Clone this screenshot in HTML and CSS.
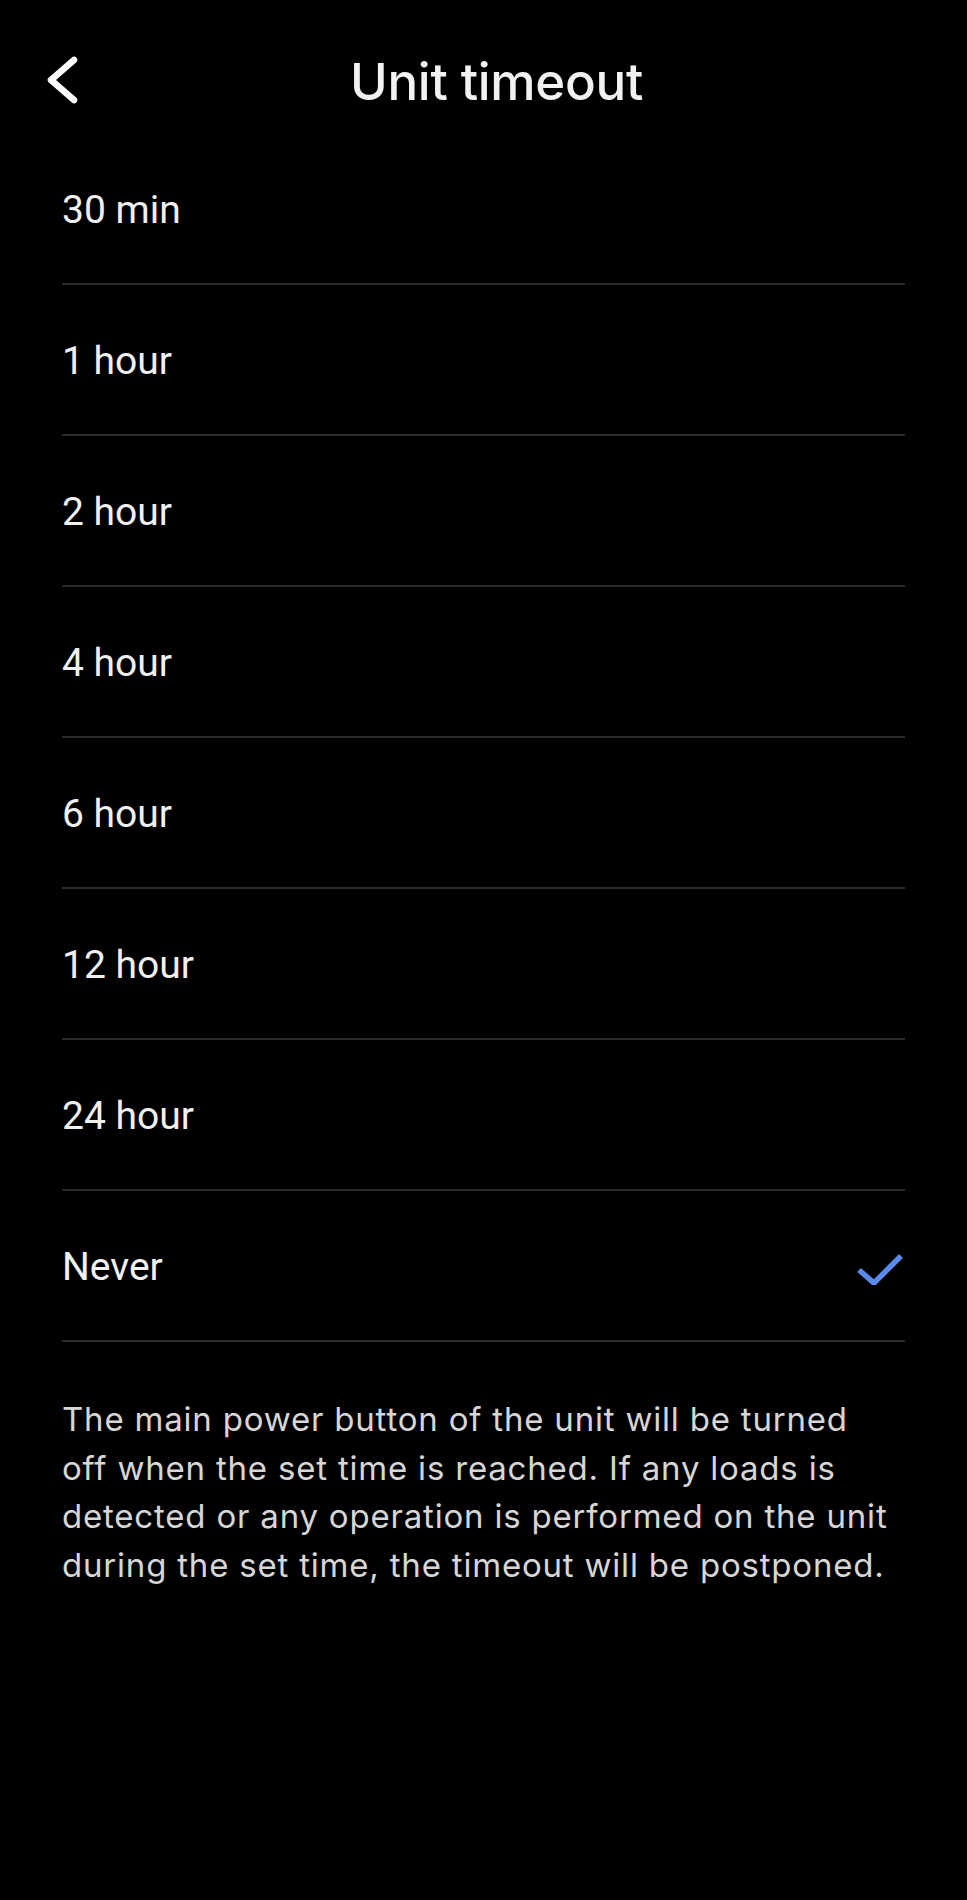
FILE: index.html
```html
<!DOCTYPE html>
<html lang="en">
<head>
    <meta charset="UTF-8">
    <meta name="viewport" content="width=device-width, initial-scale=1.0">
    <title>Unit timeout</title>
    <link rel="stylesheet" href="styles.css">
</head>
<body>
    <div class="header">
        <button class="back" aria-label="Back">
            <svg width="36" height="52" viewBox="0 0 36 52">
                <path d="M30 6 L7 26 L30 46" fill="none" stroke="#fff" stroke-width="6.5" stroke-linecap="round" stroke-linejoin="round"/>
            </svg>
        </button>
        <h1 class="title">Unit timeout</h1>
        <div class="spacer"></div>
    </div>

    <div class="content">
        <ul class="options">
            <li class="option">30 min</li>
            <li class="option">1 hour</li>
            <li class="option">2 hour</li>
            <li class="option">4 hour</li>
            <li class="option">6 hour</li>
            <li class="option">12 hour</li>
            <li class="option">24 hour</li>
            <li class="option selected">Never
                <svg class="check" width="50" height="36" viewBox="0 0 50 36">
                    <path d="M4 21 L19 34 L46 7" fill="none" stroke="#5a8bea" stroke-width="5.5"/>
                </svg>
            </li>
        </ul>
        <p class="note">The main power button of the unit will be turned<br>off when the set time is reached. If any loads is<br>detected or any operation is performed on the unit<br>during the set time, the timeout will be postponed.</p>
    </div>
</body>
</html>
```

FILE: styles.css
```css
body { margin: 0; background: #000; color: #eee; font-family: Roboto, "Noto Sans", sans-serif; }
.header { display: flex; align-items: flex-start; height: 134px; padding: 54px 0 0 44px; box-sizing: border-box; }
.back { background: none; border: none; padding: 0; width: 56px; height: 52px; cursor: pointer; }
.back svg { display: block; }
.title { flex: 1; margin: 2px 0 0; text-align: center; font-family: Inter, "Noto Sans", sans-serif; font-weight: 500; font-size: 51px; line-height: 1; color: #f2f2f2; letter-spacing: -0.3px; }
.spacer { width: 74px; }
.content { padding: 0 62px; }
.options { list-style: none; margin: 0; padding: 0; }
.option { display: flex; align-items: center; justify-content: space-between; height: 147px; padding-top: 2px; border-bottom: 2px solid #2a2a2a; font-size: 39px; color: #f0f0f0; }
.check { display: block; margin-right: 0; }
.note { margin: 53px 0 0; font-family: Inter, "Noto Sans", sans-serif; font-size: 33px; line-height: 48.5px; color: #d6d6d6; letter-spacing: 0.8px; white-space: nowrap; }
```
